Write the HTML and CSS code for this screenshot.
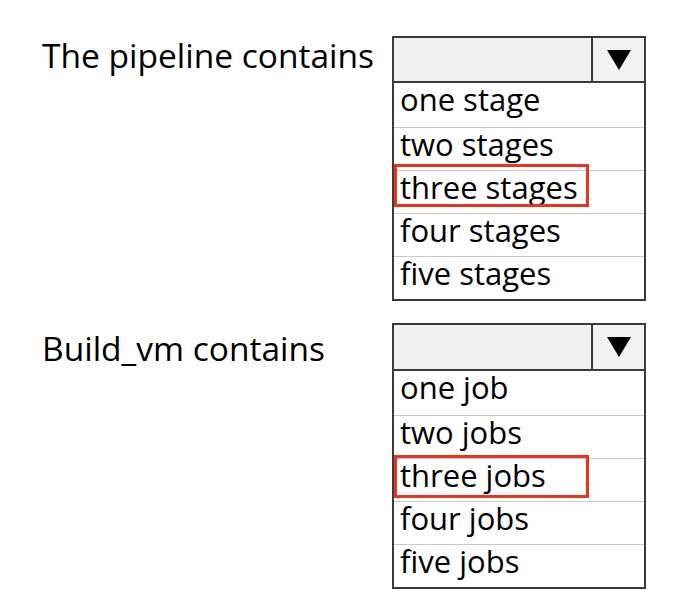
FILE: index.html
```html
<!DOCTYPE html>
<html>
<head>
<meta charset="utf-8">
<link rel="stylesheet" href="styles.css">
</head>
<body>
<div class="page">
  <div class="question q1">
    <div class="label">The pipeline contains</div>
    <div class="select">
      <div class="head"><div class="value"></div><div class="btn"><span class="tri"></span></div></div>
      <div class="opt">one stage</div>
      <div class="opt">two stages</div>
      <div class="opt sel">three stages<span class="mark"></span></div>
      <div class="opt">four stages</div>
      <div class="opt">five stages</div>
    </div>
  </div>
  <div class="question q2">
    <div class="label">Build_vm contains</div>
    <div class="select">
      <div class="head"><div class="value"></div><div class="btn"><span class="tri"></span></div></div>
      <div class="opt">one job</div>
      <div class="opt">two jobs</div>
      <div class="opt sel">three jobs<span class="mark"></span></div>
      <div class="opt">four jobs</div>
      <div class="opt">five jobs</div>
    </div>
  </div>
</div>
</body>
</html>
```
FILE: styles.css
```css
html, body { margin: 0; padding: 0; background: #fff; }
body { font-family: "Open Sans", "Liberation Sans", sans-serif; color: #000; }
.page { display: flex; flex-direction: column; padding: 36px 0 0 42px; gap: 22px; }
.question { display: flex; align-items: flex-start; }
.label { width: 350px; font-size: 33.5px; line-height: 36px; padding-top: 1px; white-space: nowrap; }
.q2 .label { padding-top: 7px; }
.select { width: 250px; border: 2px solid #3a3a3a; }
.head { display: flex; height: 43px; background: #f0f0f0; border-bottom: 2px solid #3a3a3a; }
.q2 .head { height: 44px; }
.value { flex: 1; }
.btn { width: 51px; border-left: 2px solid #3a3a3a; display: flex; align-items: center; justify-content: center; background: #f2f2f2; }
.tri { width: 0; height: 0; border-left: 12px solid transparent; border-right: 12px solid transparent; border-top: 20px solid #000; }
.opt { position: relative; height: 42px; line-height: 32px; padding-left: 6px; font-size: 31px; border-top: 1px solid #c8c8c8; white-space: nowrap; }
.head + .opt { border-top: none; height: 44px; }
.mark { position: absolute; left: 0; top: -7px; width: 189px; height: 37px; border: 3px solid #e8341c; }
.q2 .mark { top: -4px; }
```
